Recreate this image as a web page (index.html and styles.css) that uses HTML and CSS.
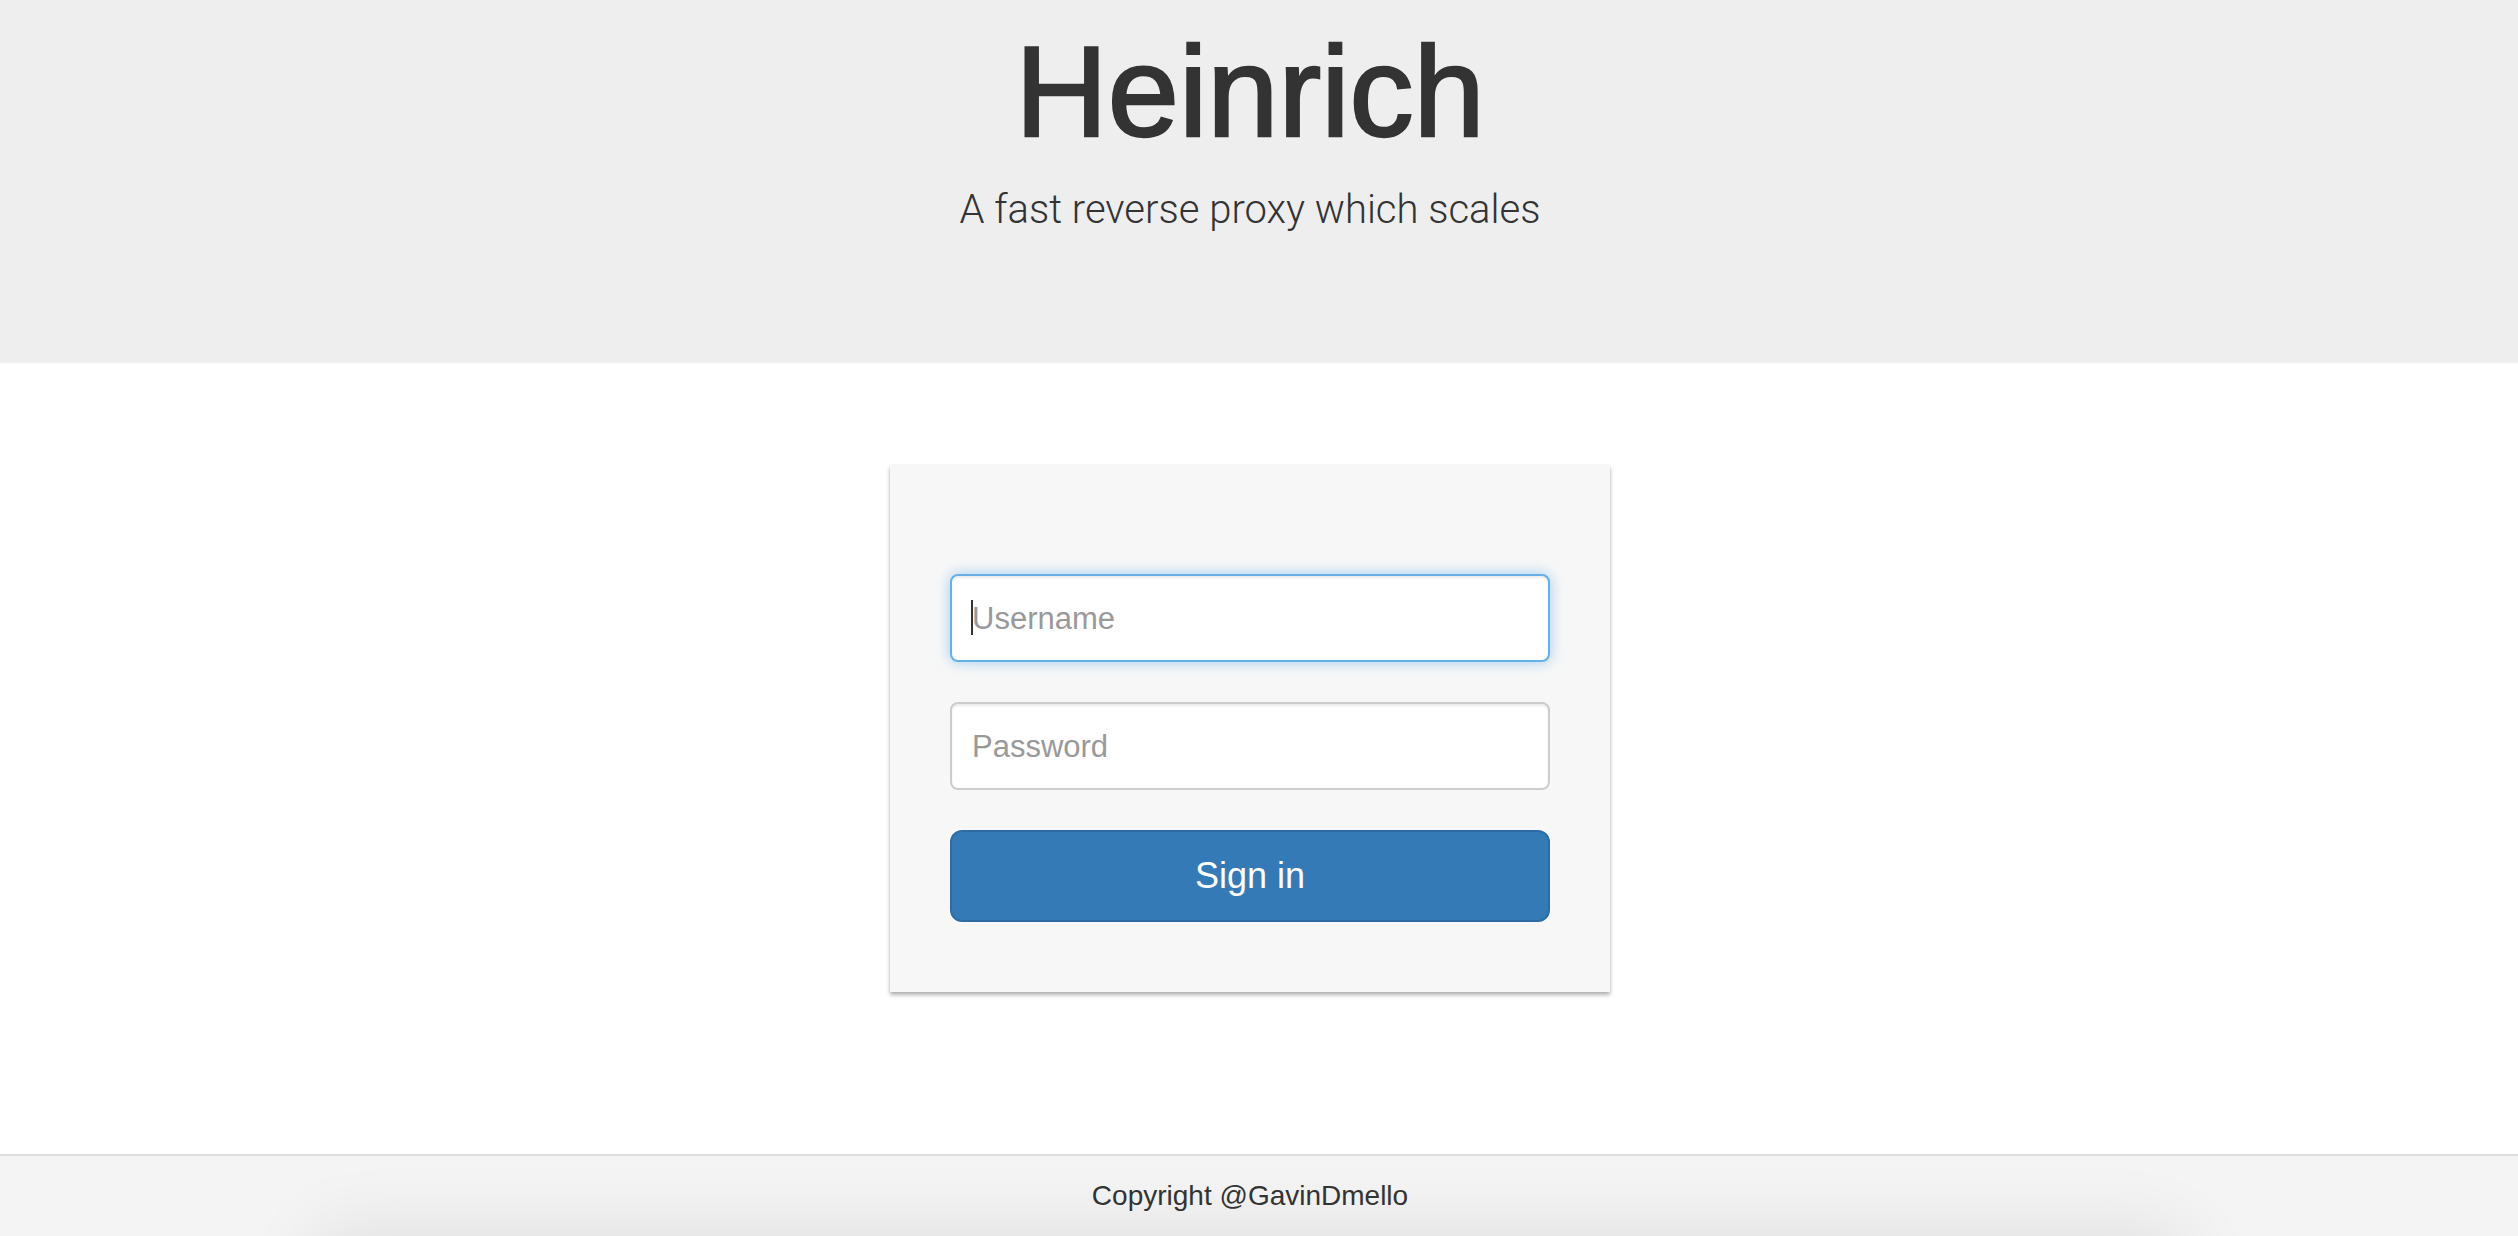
FILE: index.html
```html
<!DOCTYPE html>
<html lang="en">
<head>
<meta charset="utf-8">
<title>Heinrich</title>
<link rel="stylesheet" href="styles.css">
</head>
<body>
<header class="jumbotron">
  <h1 class="title">Heinrich</h1>
  <p class="tagline">A fast reverse proxy which scales</p>
</header>
<main class="main">
  <form class="card">
    <div class="field field-focus">
      <input class="input input-focus" type="text" placeholder="Username">
    </div>
    <div class="field">
      <input class="input" type="password" placeholder="Password">
    </div>
    <button class="btn" type="button">Sign in</button>
  </form>
</main>
<footer class="footer">
  <p class="copy">Copyright @GavinDmello</p>
</footer>
</body>
</html>
```
FILE: styles.css
```css
html, body {
  margin: 0;
  padding: 0;
}
body {
  font-family: "Liberation Sans", Arial, sans-serif;
  color: #333;
  background: #fff;
  height: 1236px;
  overflow: hidden;
  display: flex;
  flex-direction: column;
}
.jumbotron {
  background: #eeeeee;
  height: 363px;
  padding-right: 18px;
  box-sizing: border-box;
  text-align: center;
  overflow: hidden;
}
.title {
  margin: 28px 0 0;
  font-size: 128px;
  line-height: 128px;
  font-weight: 400;
  color: #333;
  -webkit-text-stroke: 2.5px #333;
}
.tagline {
  margin: 31px 0 0;
  font-family: "Roboto", "Liberation Sans", sans-serif;
  font-weight: 300;
  font-size: 40px;
  line-height: 46px;
  color: #333;
}
.main {
  flex: 1;
  padding-right: 18px;
  display: flex;
  justify-content: center;
  align-items: flex-start;
}
.card {
  margin-top: 102px;
  width: 720px;
  box-sizing: border-box;
  padding: 109px 60px 70px;
  background: #f7f7f7;
  box-shadow: 0 3px 4px rgba(0, 0, 0, 0.3), 0 0 2px rgba(0, 0, 0, 0.08);
  display: flex;
  flex-direction: column;
  gap: 40px;
}
.field {
  position: relative;
}
.input {
  display: block;
  width: 100%;
  height: 88px;
  box-sizing: border-box;
  padding: 2px 20px 0;
  border: 2px solid #cccccc;
  border-radius: 8px;
  background: #fff;
  font-family: "Liberation Sans", Arial, sans-serif;
  font-size: 31px;
  color: #555;
  outline: none;
  box-shadow: inset 0 2px 2px rgba(0, 0, 0, 0.075);
}
.input::placeholder {
  color: #999;
  opacity: 1;
}
.input-focus {
  border-color: #66afe9;
  box-shadow: inset 0 2px 2px rgba(0, 0, 0, 0.075), 0 0 14px rgba(102, 175, 233, 0.6);
}
.field-focus::after {
  content: "";
  position: absolute;
  left: 21px;
  top: 26px;
  width: 2px;
  height: 35px;
  background: #333;
}
.btn {
  display: block;
  width: 100%;
  height: 92px;
  box-sizing: border-box;
  border: 2px solid #2e6da4;
  border-radius: 12px;
  background: #337ab7;
  color: #fff;
  font-family: "Liberation Sans", Arial, sans-serif;
  font-size: 36px;
  cursor: pointer;
}
.footer {
  position: relative;
  height: 82px;
  box-sizing: border-box;
  border-top: 2px solid #dddddd;
  background: #f4f4f4;
  padding-right: 18px;
  overflow: hidden;
  text-align: center;
}
.footer::after {
  content: "";
  position: absolute;
  left: 320px;
  right: 338px;
  top: 86px;
  height: 60px;
  border-radius: 60px;
  box-shadow: 0 0 70px 16px rgba(0, 0, 0, 0.08);
}
.copy {
  position: relative;
  z-index: 1;
  margin: 20px 0 0;
  font-size: 28px;
  line-height: 40px;
  color: #333;
}
```
